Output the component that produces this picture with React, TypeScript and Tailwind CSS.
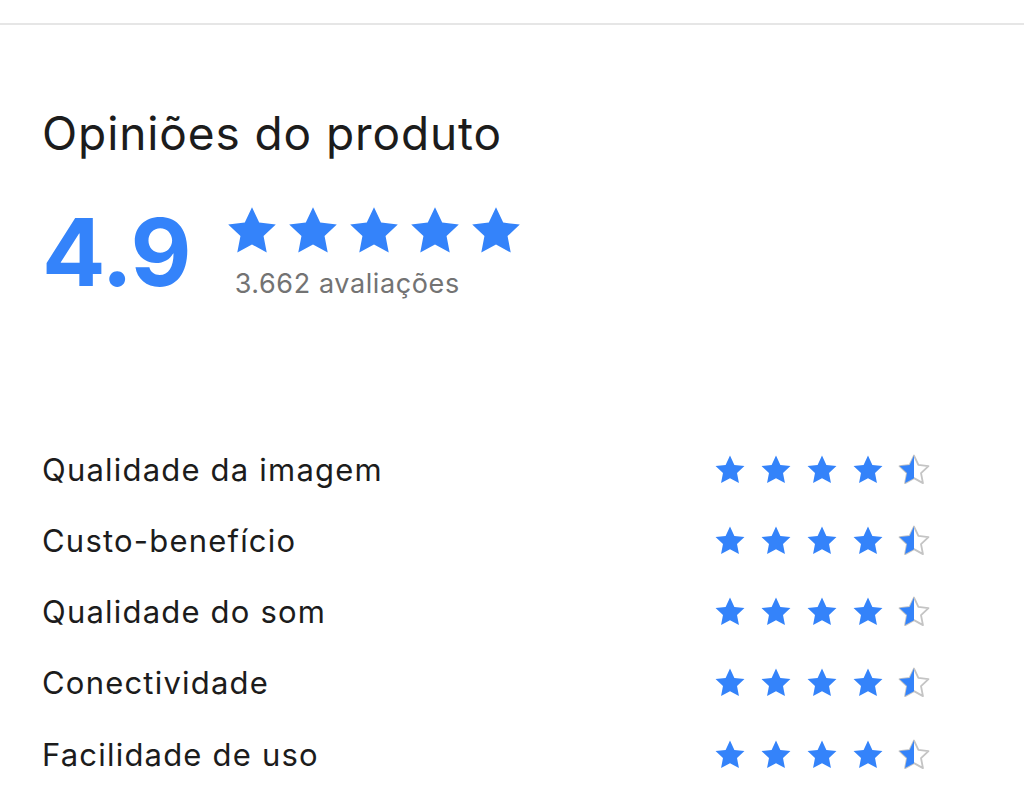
import React from "react";

const BLUE = "#3483fa";
const STAR = "M12 1.8l3.09 6.6 7.11.86-5.25 4.93 1.36 7.06L12 17.77l-6.31 3.48 1.36-7.06L1.8 9.26l7.11-.86L12 1.8z";

function Star({ size, kind }: { size: number; kind: "full" | "half" }) {
  const id = React.useId();
  return (
    <svg width={size} height={size} viewBox="0 0 24 24" className="block shrink-0">
      {kind === "full" ? (
        <path d={STAR} fill={BLUE} />
      ) : (
        <>
          <defs>
            <clipPath id={id}>
              <rect x="0" y="0" width="12" height="24" />
            </clipPath>
          </defs>
          <path d={STAR} fill="none" stroke="#c4c4c4" strokeWidth="1.3" strokeLinejoin="round" />
          <path d={STAR} fill={BLUE} clipPath={`url(#${id})`} />
        </>
      )}
    </svg>
  );
}

const rows = [
  "Qualidade da imagem",
  "Custo-benefício",
  "Qualidade do som",
  "Conectividade",
  "Facilidade de uso",
];

export default function App() {
  return (
    <div
      className="w-[1024px] h-[802px] bg-white overflow-hidden text-[#1c1c1c]"
      style={{ fontFamily: "Inter, 'Noto Sans', sans-serif" }}
    >
      <div className="h-[25px] border-b-2 border-[#e6e6e6]" />
      <div className="pl-[42px]">
        <h1 className="mt-[80px] text-[46px] leading-[56px] font-normal tracking-[0.9px]">
          Opiniões do produto
        </h1>
        <div className="mt-[20px] flex items-start">
          <div className="mt-[16px] text-[94px] leading-[110px] font-bold text-[#3483fa] tracking-[-1px]">4.9</div>
          <div className="ml-[33px] mt-[22px] flex flex-col">
            <div className="flex gap-[5px]">
              {[0, 1, 2, 3, 4].map((i) => (
                <Star key={i} size={56} kind="full" />
              ))}
            </div>
            <div className="ml-[11px] mt-[9px] text-[27px] leading-[32px] tracking-[0.6px] text-[#737373]">
              3.662 avaliações
            </div>
          </div>
        </div>
        <div className="mt-[127px] flex flex-col">
          {rows.map((r) => (
            <div key={r} className="h-[71.25px] flex items-center">
              <div className="w-[671px] text-[31px] leading-[40px] tracking-[1.2px]">{r}</div>
              <div className="flex gap-[12px]">
                {[0, 1, 2, 3].map((i) => (
                  <Star key={i} size={34} kind="full" />
                ))}
                <Star size={34} kind="half" />
              </div>
            </div>
          ))}
        </div>
      </div>
    </div>
  );
}
